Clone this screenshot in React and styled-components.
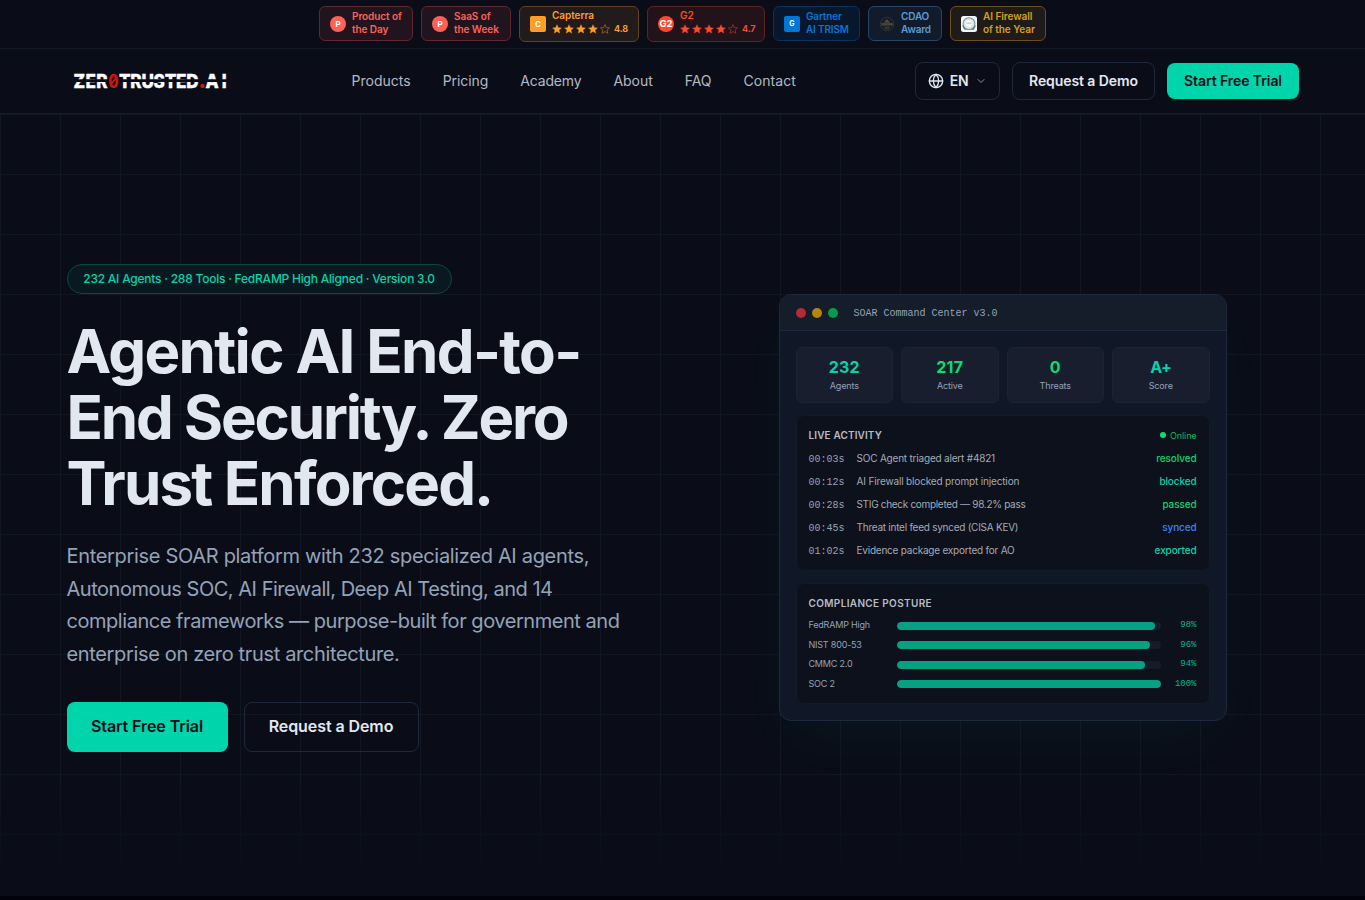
import React from "react";
import styled, { createGlobalStyle } from "styled-components";
import { Globe, ChevronDown } from "lucide-react";

const GlobalStyle = createGlobalStyle`
  * { box-sizing: border-box; margin: 0; padding: 0; }
  body {
    background: #02020c;
    color: #e2e8f0;
    font-family: Inter, sans-serif;
    overflow: hidden;
    -webkit-font-smoothing: antialiased;
  }
  button { font: inherit; color: inherit; background: none; border: 0; }
`;

const mono = `"Liberation Mono", monospace`;

const Page = styled.div`
  height: 900px;
  overflow: hidden;
  display: flex;
  flex-direction: column;
`;

/* ---- Awards strip ---- */
const AwardBar = styled.div`
  height: 49px;
  display: flex;
  align-items: flex-start;
  justify-content: center;
  gap: 8px;
  padding-top: 6px;
  background: #0a0d18;
  border-bottom: 1px solid #111624;
`;

const Award = styled.div`
  display: flex;
  align-items: center;
  gap: 6px;
  width: ${(p) => p.$w}px;
  height: ${(p) => (p.$tall ? 36 : 35)}px;
  padding: 0 0 0 10px;
  border-radius: 6px;
  border: 1px solid ${(p) => p.$border};
  background: ${(p) => p.$bg};
  color: ${(p) => p.$color};
  white-space: nowrap;
`;

const AwardIcon = styled.span`
  flex: none;
  display: grid;
  place-items: center;
  width: 16px;
  height: 16px;
  border-radius: ${(p) => (p.$round ? "50%" : "2px")};
  background: ${(p) => p.$bg};
  color: #fff;
  font-size: ${(p) => p.$size || 8}px;
  font-weight: 700;
  line-height: 1;
`;

const AwardText = styled.div`
  padding-bottom: 2px;
  font-size: 10px;
  font-weight: 600;
  line-height: 12.5px;
  letter-spacing: ${(p) => p.$ls || -0.06}px;
`;

const AwardLine = styled.div`
  height: 12.5px;
`;

const Rating = styled.div`
  display: flex;
  align-items: center;
  height: 15px;
  gap: 2px;
  font-size: 9px;
  font-weight: 700;
  letter-spacing: -0.13px;
  span { margin-left: 2px; }
`;

/* ---- Header ---- */
const Header = styled.header`
  height: 65px;
  display: flex;
  align-items: center;
  background: #0a0d18;
  border-bottom: 1px solid #151b27;
  padding: 0 66px 0 67px;
`;

const LogoSlot = styled.div`
  width: 284.5px;
  height: 64px;
  padding-left: 6px;
  display: flex;
  align-items: center;
`;

const Nav = styled.nav`
  display: flex;
  gap: 32px;
  flex: 1;
  font-size: 14px;
  line-height: 20px;
  color: #b4b9c3;
`;

const NavLink = styled.a`
  letter-spacing: ${(p) => p.$ls}px;
`;

const Actions = styled.div`
  display: flex;
  align-items: center;
  gap: 12px;
`;

const Button = styled.button`
  display: flex;
  align-items: center;
  justify-content: center;
  width: ${(p) => p.$w}px;
  height: ${(p) => p.$h}px;
  padding-bottom: 2px;
  border-radius: 8px;
  font-size: ${(p) => p.$size || 14}px;
  font-weight: 600;
  letter-spacing: -0.08px;
  white-space: nowrap;
  background: ${(p) => (p.$primary ? "#00d4aa" : "transparent")};
  color: ${(p) => (p.$primary ? "#0a0e1a" : "#e2e8f0")};
  border: ${(p) => (p.$primary ? "0" : "1px solid #1e293b")};
`;

const LangButton = styled(Button)`
  gap: 6px;
  padding-bottom: 0;
  letter-spacing: -0.3px;
  span { padding-bottom: 1px; }
  svg:last-child { color: #8a93a3; margin-left: 1px; }
`;

/* ---- Hero ---- */
const Hero = styled.main`
  position: relative;
  height: 782px;
  display: grid;
  grid-template-columns: 592px 592px;
  column-gap: 48px;
  align-items: start;
  padding: 150px 66.5px 0;
  background: #0a0d18;
`;

const GridLines = styled.div`
  position: absolute;
  inset: 0;
  background-image: linear-gradient(#111621 1px, transparent 1px),
    linear-gradient(90deg, #111621 1px, transparent 1px);
  background-size: 60px 60px;
  mask-image: linear-gradient(#000 84%, transparent 100%);
`;

const Copy = styled.section`
  position: relative;
  display: flex;
  flex-direction: column;
  align-items: flex-start;
`;

const Pill = styled.div`
  height: 30px;
  width: 385px;
  display: flex;
  align-items: center;
  justify-content: center;
  padding-bottom: 1.5px;
  border-radius: 15px;
  border: 1px solid #08493f;
  background: #0a1921;
  color: #00d4aa;
  font-size: 12px;
  font-weight: 500;
  letter-spacing: -0.225px;
  white-space: nowrap;
`;

const Title = styled.h1`
  margin-top: 24px;
  font-size: 60px;
  line-height: 66px;
  font-weight: 700;
  white-space: nowrap;
`;

const TitleLine = styled.span`
  display: block;
  letter-spacing: ${(p) => p.$ls}px;
`;

const Lead = styled.p`
  margin-top: 24px;
  font-size: 20px;
  line-height: 32.5px;
  color: #94a3b8;
  white-space: nowrap;
`;

const LeadLine = styled.span`
  display: block;
  letter-spacing: ${(p) => p.$ls}px;
`;

const Ctas = styled.div`
  display: flex;
  gap: 16px;
  margin-top: 32px;
`;

/* ---- Command center card ---- */
const Card = styled.section`
  position: relative;
  justify-self: center;
  width: 448px;
  height: 427px;
  margin-top: 30px;
  border-radius: 12px;
  border: 1px solid #1e293b;
  background: #101726;
  overflow: hidden;
  box-shadow: 0 25px 50px -12px rgba(0, 212, 170, 0.05);
`;

const CardHead = styled.div`
  height: 36px;
  display: flex;
  align-items: center;
  gap: 6px;
  padding: 0 16px;
  background: #151c2a;
  border-bottom: 1px solid #1e293b;
`;

const Dot = styled.i`
  width: 10px;
  height: 10px;
  border-radius: 50%;
  background: ${(p) => p.$color};
`;

const CardTitle = styled.span`
  margin-left: 10px;
  padding-top: 1px;
  font: 10px ${mono};
  color: #94a3b8;
`;

const CardBody = styled.div`
  display: flex;
  flex-direction: column;
  gap: 12px;
  padding: 16px;
`;

const Stats = styled.div`
  display: grid;
  grid-template-columns: repeat(4, 1fr);
  gap: 8px;
`;

const Stat = styled.div`
  height: 56px;
  padding-top: 7px;
  border-radius: 6px;
  border: 1px solid #1b2432;
  background: #181e2e;
  text-align: center;
`;

const StatValue = styled.div`
  font-size: 16px;
  line-height: 24px;
  font-weight: 700;
  letter-spacing: ${(p) => p.$ls}px;
  color: ${(p) => p.$color};
`;

const StatLabel = styled.div`
  font-size: 9px;
  line-height: 13.5px;
  letter-spacing: -0.15px;
  color: #94a3b8;
`;

const Panel = styled.div`
  display: flex;
  flex-direction: column;
  gap: ${(p) => p.$gap}px;
  padding: 12px;
  border-radius: 8px;
  border: 1px solid #141b28;
  background: #0c111c;
`;

const PanelHead = styled.div`
  display: flex;
  justify-content: space-between;
  align-items: center;
  height: 15px;
  margin-bottom: ${(p) => p.$mb || 0}px;
`;

const PanelTitle = styled.h2`
  font-size: 10px;
  line-height: 15px;
  font-weight: 600;
  letter-spacing: ${(p) => p.$ls}px;
  color: #b8bdc8;
`;

const Online = styled.span`
  display: flex;
  align-items: center;
  gap: 4px;
  padding-bottom: 1px;
  font-size: 9px;
  letter-spacing: -0.1px;
  color: #05b95a;
  &::before {
    content: "";
    width: 6px;
    height: 6px;
    border-radius: 50%;
    background: #05df72;
  }
`;

const LogRow = styled.div`
  display: flex;
  align-items: center;
  gap: 12px;
  height: 15px;
  font-size: 10px;
  line-height: 15px;
  white-space: nowrap;
`;

const LogTime = styled.span`
  padding-top: 1px;
  font-family: ${mono};
  color: #94a3b8;
`;

const LogText = styled.span`
  flex: 1;
  letter-spacing: ${(p) => p.$ls}px;
  color: #a5abb6;
`;

const LogState = styled.span`
  font-weight: 500;
  letter-spacing: -0.12px;
  color: ${(p) => p.$color};
`;

const Metric = styled.div`
  display: grid;
  grid-template-columns: 80px 1fr 28px;
  column-gap: 8px;
  align-items: center;
  height: 13.5px;
  font-size: 9px;
  line-height: 13.5px;
  color: #94a3b8;
`;

const MetricName = styled.span`
  padding-bottom: 2px;
  line-height: 11.5px;
  letter-spacing: -0.2px;
`;

const Track = styled.div`
  height: 8px;
  border-radius: 4px;
  background: #151c29;
  overflow: hidden;
`;

const Fill = styled.div`
  height: 100%;
  border-radius: 4px;
  background: #06a085;
`;

const Percent = styled.span`
  font-family: ${mono};
  text-align: right;
  color: #05b592;
`;

const Star = ({ empty }) => (
  <svg width="10" height="10" viewBox="0 0 20 20" opacity={empty ? 0.6 : 1}>
    <path
      d="M10 1.2l2.6 6 6.5.6-4.9 4.3 1.5 6.4L10 15.1l-5.7 3.4 1.5-6.4L.9 7.8l6.5-.6z"
      fill={empty ? "none" : "currentColor"}
      stroke="currentColor"
      strokeWidth={empty ? 1.5 : 0.5}
    />
  </svg>
);

const Stars = ({ score }) => (
  <Rating>
    <Star /><Star /><Star /><Star /><Star empty />
    <span>{score}</span>
  </Rating>
);

const CdaoSeal = () => (
  <svg width="16" height="16" viewBox="0 0 16 16">
    <circle cx="8" cy="8" r="7.5" fill="#1b1c1d" />
    <circle cx="8" cy="8" r="6.6" fill="none" stroke="#4b4b4a" strokeWidth="0.9" strokeDasharray="1 .7" />
    <path d="M8 3.2L4.7 6.5h6.6z" fill="#4c4c4c" />
    <path d="M2.5 7.2h11v2.2h-11z" fill="#555453" />
    <path d="M3.5 8.3h9" stroke="#222" strokeWidth="0.6" strokeDasharray="1 .5" />
    <path d="M5 11.2h6M6 12.7h4" stroke="#484848" strokeWidth="0.8" />
  </svg>
);

const FirewallSeal = () => (
  <svg width="16" height="16" viewBox="0 0 16 16">
    <rect width="16" height="16" rx="2.5" fill="#f6f8f8" />
    <path d="M1 9.5l2.2 4 9.6.2L15 9.5z" fill="#3b7296" />
    <circle cx="8" cy="7.6" r="5.9" fill="#e6ebeb" stroke="#7593a3" strokeWidth="1.1" />
    <circle cx="8" cy="7.6" r="4.1" fill="#f6f6f2" stroke="#c8cfd0" strokeWidth="0.6" />
    <path d="M5.5 7.2h5" stroke="#9ea6a6" strokeWidth="0.7" />
  </svg>
);

/* Stencil wordmark: tall caps with a horizontal cut through the white letters */
const Logo = () => (
  <svg width="156" height="32" viewBox="0 -6 156 32" fontFamily="Inter, sans-serif" fontWeight="800" fontSize="14.6">
    <g fill="#fff" stroke="#fff" strokeWidth="0.3">
      <text transform="translate(0.6 17) scale(1.17 1.3)" textLength="29" lengthAdjust="spacing">ZER</text>
      <text transform="translate(46 17) scale(1.17 1.3)" textLength="68" lengthAdjust="spacing">TRUSTED</text>
      <text transform="translate(132.6 17) scale(1.17 1.3)" textLength="18" lengthAdjust="spacing">AI</text>
    </g>
    <path d="M0 9.6H156" stroke="#0a0d18" strokeWidth="2.6" />
    <g fill="#e01005">
      <text x="0" y="0" transform="translate(35.2 17) scale(1.05 1.3)" fontWeight="700">0</text>
      <circle cx="129.5" cy="14.9" r="2.2" />
    </g>
    <path d="M38.3 12.8L42.8 7.2" stroke="#e01005" strokeWidth="1.6" />
  </svg>
);

const logs = [
  ["00:03s", "SOC Agent triaged alert #4821", "resolved", "#05d46d", -0.2],
  ["00:12s", "AI Firewall blocked prompt injection", "blocked", "#00d4aa", -0.155],
  ["00:28s", "STIG check completed — 98.2% pass", "passed", "#05d46d", -0.31],
  ["00:45s", "Threat intel feed synced (CISA KEV)", "synced", "#3b82f6", -0.25],
  ["01:02s", "Evidence package exported for AO", "exported", "#00d4aa", -0.22],
];

const metrics = [
  ["FedRAMP High", 98],
  ["NIST 800-53", 96],
  ["CMMC 2.0", 94],
  ["SOC 2", 100],
];

const stats = [
  ["232", "Agents", "#00d4aa", 0.17],
  ["217", "Active", "#05df72", 0.2],
  ["0", "Threats", "#05df72", 0],
  ["A+", "Score", "#00d4aa", -0.6],
];

const links = [
  ["Products", 0.02], ["Pricing", -0.08], ["Academy", -0.17],
  ["About", 0], ["FAQ", -0.1], ["Contact", 0.08],
];

const red = { $border: "#62262e", $bg: "#22141f", $color: "#ff6154" };

export default function App() {
  return (
    <Page>
      <GlobalStyle />
      <AwardBar>
        <Award $w={94} {...red}>
          <AwardIcon $round $bg="#ff6154">P</AwardIcon>
          <AwardText><AwardLine>Product of</AwardLine><AwardLine>the Day</AwardLine></AwardText>
        </Award>
        <Award $w={90} {...red}>
          <AwardIcon $round $bg="#ff6154">P</AwardIcon>
          <AwardText><AwardLine>SaaS of</AwardLine><AwardLine>the Week</AwardLine></AwardText>
        </Award>
        <Award $tall $w={120} $border="#634219" $bg="#221b1b" $color="#ff9d28">
          <AwardIcon $bg="#ff9d28">C</AwardIcon>
          <AwardText><AwardLine>Capterra</AwardLine><Stars score="4.8" /></AwardText>
        </Award>
        <Award $tall $w={118} $border="#63201f" $bg="#22131b" $color="#ff492c">
          <AwardIcon $round $bg="#ff492c" $size={9.5}>G2</AwardIcon>
          <AwardText><AwardLine>G2</AwardLine><Stars score="4.7" /></AwardText>
        </Award>
        <Award $w={87} $border="#07325b" $bg="#08172b" $color="#0076d6">
          <AwardIcon $bg="#0076d6" $size={7}>G</AwardIcon>
          <AwardText $ls={-0.17}><AwardLine>Gartner</AwardLine><AwardLine>AI TRISM</AwardLine></AwardText>
        </Award>
        <Award $w={74} $border="#294565" $bg="#121b2c" $color="#5b9bd5">
          <CdaoSeal />
          <AwardText $ls={-0.15}><AwardLine>CDAO</AwardLine><AwardLine>Award</AwardLine></AwardText>
        </Award>
        <Award $w={96} $border="#6b5013" $bg="#1f1b1a" $color="#d4a017">
          <FirewallSeal />
          <AwardText><AwardLine>AI Firewall</AwardLine><AwardLine>of the Year</AwardLine></AwardText>
        </Award>
      </AwardBar>

      <Header>
        <LogoSlot><Logo /></LogoSlot>
        <Nav>
          {links.map(([label, ls]) => <NavLink key={label} $ls={ls}>{label}</NavLink>)}
        </Nav>
        <Actions>
          <LangButton $w={85} $h={38}>
            <Globe size={16} strokeWidth={2} />
            <span>EN</span>
            <ChevronDown size={12} strokeWidth={2} />
          </LangButton>
          <Button $w={143} $h={38}>Request a Demo</Button>
          <Button $primary $w={132} $h={36}>Start Free Trial</Button>
        </Actions>
      </Header>

      <Hero>
        <GridLines />
        <Copy>
          <Pill>232 AI Agents · 288 Tools · FedRAMP High Aligned · Version 3.0</Pill>
          <Title>
            <TitleLine $ls={-1.66}>Agentic AI End-to-</TitleLine>
            <TitleLine $ls={-2.14}>End Security. Zero</TitleLine>
            <TitleLine $ls={-1.83}>Trust Enforced.</TitleLine>
          </Title>
          <Lead>
            <LeadLine $ls={-0.315}>Enterprise SOAR platform with 232 specialized AI agents,</LeadLine>
            <LeadLine $ls={-0.478}>Autonomous SOC, AI Firewall, Deep AI Testing, and 14</LeadLine>
            <LeadLine $ls={-0.455}>compliance frameworks — purpose-built for government and</LeadLine>
            <LeadLine $ls={-0.35}>enterprise on zero trust architecture.</LeadLine>
          </Lead>
          <Ctas>
            <Button $primary $w={161} $h={50} $size={16}>Start Free Trial</Button>
            <Button $w={175} $h={50} $size={16}>Request a Demo</Button>
          </Ctas>
        </Copy>

        <Card>
          <CardHead>
            <Dot $color="#b52b35" />
            <Dot $color="#b5860f" />
            <Dot $color="#079a4c" />
            <CardTitle>SOAR Command Center v3.0</CardTitle>
          </CardHead>
          <CardBody>
            <Stats>
              {stats.map(([value, label, color, ls]) => (
                <Stat key={label}>
                  <StatValue $color={color} $ls={ls}>{value}</StatValue>
                  <StatLabel>{label}</StatLabel>
                </Stat>
              ))}
            </Stats>
            <Panel $gap={8}>
              <PanelHead>
                <PanelTitle $ls={0.13}>LIVE ACTIVITY</PanelTitle>
                <Online>Online</Online>
              </PanelHead>
              {logs.map(([time, text, state, color, ls]) => (
                <LogRow key={time}>
                  <LogTime>{time}</LogTime>
                  <LogText $ls={ls}>{text}</LogText>
                  <LogState $color={color}>{state}</LogState>
                </LogRow>
              ))}
            </Panel>
            <Panel $gap={6}>
              <PanelHead $mb={2}>
                <PanelTitle $ls={0.35}>COMPLIANCE POSTURE</PanelTitle>
              </PanelHead>
              {metrics.map(([name, value]) => (
                <Metric key={name}>
                  <MetricName>{name}</MetricName>
                  <Track><Fill style={{ width: `${value}%` }} /></Track>
                  <Percent>{value}%</Percent>
                </Metric>
              ))}
            </Panel>
          </CardBody>
        </Card>
      </Hero>
    </Page>
  );
}
